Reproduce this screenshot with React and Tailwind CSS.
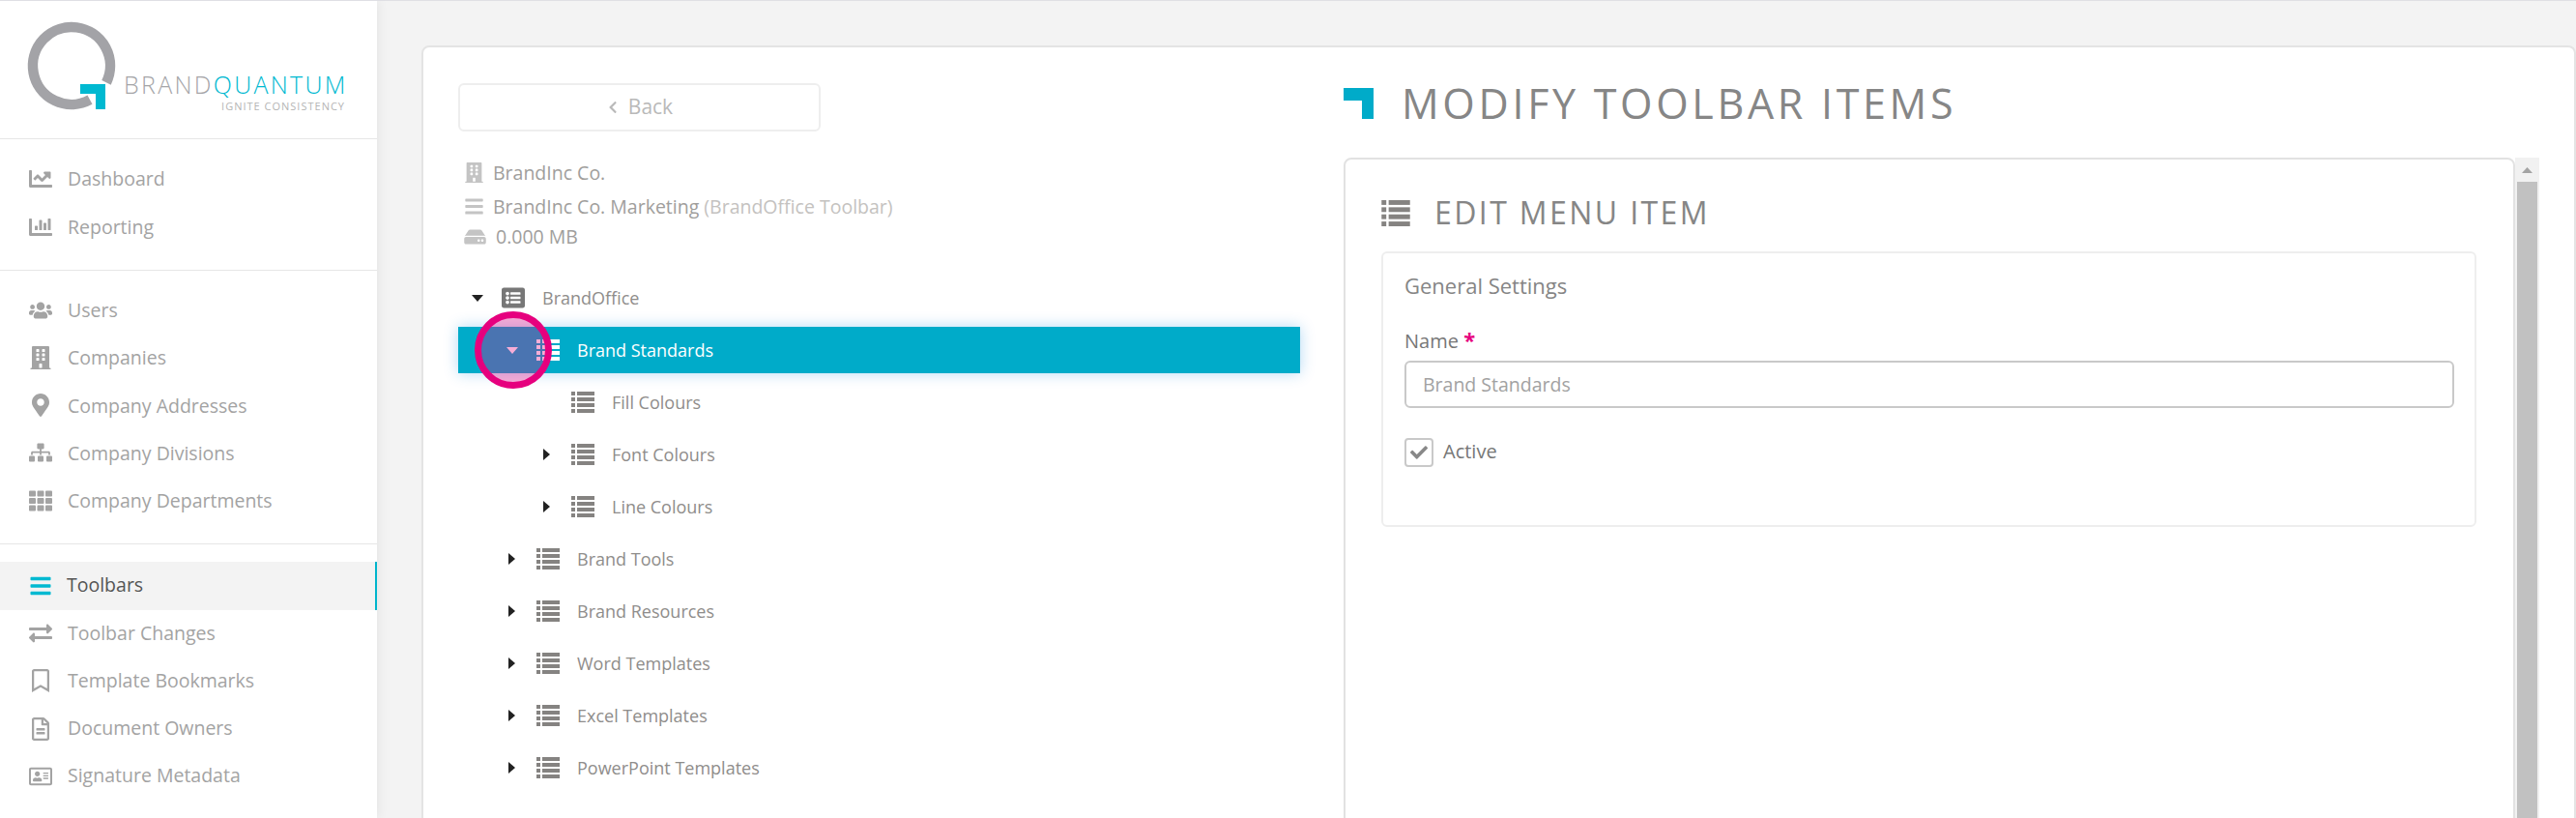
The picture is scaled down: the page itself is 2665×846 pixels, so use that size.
import React from 'react';
import {
  FaChartLine, FaChartBar, FaUsers, FaBuilding, FaMapMarkerAlt, FaSitemap, FaTh, FaBars,
  FaExchangeAlt, FaRegBookmark, FaRegFileAlt, FaRegAddressCard, FaHdd, FaChevronLeft, FaCheck, FaListAlt,
} from 'react-icons/fa';

const font = { fontFamily: '"Open Sans", sans-serif' };

const ListIcon = ({ className = '' }) => (
  <svg viewBox="0 0 24 22" className={className} fill="currentColor">
    <rect x="0" y="0" width="4" height="4" />
    <rect x="6" y="0" width="18" height="4" />
    <rect x="0" y="6" width="4" height="4" />
    <rect x="6" y="6" width="18" height="4" />
    <rect x="0" y="12" width="4" height="4" />
    <rect x="6" y="12" width="18" height="4" />
    <rect x="0" y="18" width="4" height="4" />
    <rect x="6" y="18" width="18" height="4" />
  </svg>
);

const Caret = ({ down, className = '' }) =>
  down ? (
    <svg viewBox="0 0 12 7" className={`w-3 h-[7px] ${className}`} fill="currentColor"><polygon points="0,0 12,0 6,7" /></svg>
  ) : (
    <svg viewBox="0 0 7 12" className={`w-[7px] h-3 -ml-[2px] ${className}`} fill="currentColor"><polygon points="0,0 7,6 0,12" /></svg>
  );

const sections = [
  { cls: 'pt-4 pb-[19px]', rowH: 'h-[50px]', items: [
    { label: 'Dashboard', Icon: FaChartLine },
    { label: 'Reporting', Icon: FaChartBar },
  ] },
  { cls: 'pt-4 pb-5', rowH: 'h-[49.25px]', items: [
    { label: 'Users', Icon: FaUsers },
    { label: 'Companies', Icon: FaBuilding },
    { label: 'Company Addresses', Icon: FaMapMarkerAlt },
    { label: 'Company Divisions', Icon: FaSitemap },
    { label: 'Company Departments', Icon: FaTh },
  ] },
  { cls: 'pt-[18px]', rowH: 'h-[49.25px]', labelCls: 'pb-[2px]', items: [
    { label: 'Toolbars', Icon: FaBars, active: true },
    { label: 'Toolbar Changes', Icon: FaExchangeAlt },
    { label: 'Template Bookmarks', Icon: FaRegBookmark },
    { label: 'Document Owners', Icon: FaRegFileAlt },
    { label: 'Signature Metadata', Icon: FaRegAddressCard },
  ] },
];

function Logo() {
  return (
    <div className="relative h-[143px] border-b border-[#e6e6e6]">
      <svg viewBox="0 0 130 130" className="absolute left-0 top-0 w-[130px] h-[130px]" fill="none">
        <path d="M 93 102.2 A 40 40 0 1 1 110 84.4" stroke="#a3a3a7" strokeWidth="10.5" />
        <polygon points="83,86 109,86 109,112 99,112 99,96 83,96" fill="#00b9d1" />
      </svg>
      <div className="absolute left-[128px] top-[68px] text-[25px] leading-[36px] font-light tracking-[2.3px] whitespace-nowrap text-[#a5a5a8]">
        BRAND<span className="text-[#00b9d1]">QUANTUM</span>
      </div>
      <div className="absolute right-[33px] top-[101px] text-[11px] leading-4 tracking-[1px] whitespace-nowrap text-[#b5b5b5]">
        IGNITE CONSISTENCY
      </div>
    </div>
  );
}

function Sidebar() {
  return (
    <aside className="w-[390px] shrink-0 bg-white shadow-[2px_0_10px_rgba(0,0,0,0.06)]">
      <Logo />
      {sections.map((s, i) => (
        <div key={i} className={`${s.cls} ${i < sections.length - 1 ? 'border-b border-[#e6e6e6]' : ''}`}>
          {s.items.map(({ label, Icon, active }) => (
            <div
              key={label}
              className={`${s.rowH} flex items-center ${active ? 'bg-[#f3f3f3] border-r-2 border-[#00b5cc] text-[#555]' : 'text-[#a3a3a3]'}`}
            >
              <span className="w-[70px] pl-4 pr-[2px] flex justify-center shrink-0">
                <Icon className={`text-[24px] ${active ? 'text-[#00b9d1]' : ''}`} />
              </span>
              <span className={`text-[19.5px] ${active ? '-ml-px' : ''} ${s.labelCls || ''}`}>{label}</span>
            </div>
          ))}
        </div>
      ))}
    </aside>
  );
}

const tree = [
  { label: 'BrandOffice', level: 0, caret: 'down', root: true },
  { label: 'Brand Standards', level: 1, caret: 'down', selected: true },
  { label: 'Fill Colours', level: 2 },
  { label: 'Font Colours', level: 2, caret: 'right' },
  { label: 'Line Colours', level: 2, caret: 'right' },
  { label: 'Brand Tools', level: 1, caret: 'right' },
  { label: 'Brand Resources', level: 1, caret: 'right' },
  { label: 'Word Templates', level: 1, caret: 'right' },
  { label: 'Excel Templates', level: 1, caret: 'right' },
  { label: 'PowerPoint Templates', level: 1, caret: 'right' },
];

const indent = ['pl-2', 'pl-[44px]', 'pl-[80px]'];

function TreeRow({ item }) {
  const { label, level, caret, root, selected } = item;
  return (
    <div className="h-[54px] py-[3px]">
      <div className={`relative h-12 flex items-center ${indent[level]} ${selected ? 'bg-[#00abc9] text-white shadow-[0_0_14px_rgba(0,130,220,0.3)]' : 'text-[#8f8d8b]'}`}>
        <span className="w-6 flex justify-center shrink-0 mr-[13px]">
          {caret && <Caret down={caret === 'down'} className={selected ? 'text-white' : 'text-[#222]'} />}
        </span>
        {root ? (
          <FaListAlt className="text-[#777] w-6 h-6 mr-[18px] shrink-0" />
        ) : (
          <ListIcon className={`w-6 h-[22px] mr-[18px] shrink-0 ${selected ? 'text-white' : 'text-[#858381]'}`} />
        )}
        <span className="text-[18px]">{label}</span>
        {selected && (
          <span className="absolute left-[17px] top-[-16px] w-20 h-20 rounded-full border-[7px] border-[#e6007e] bg-[rgba(230,0,126,0.32)]" />
        )}
      </div>
    </div>
  );
}

function LeftColumn() {
  return (
    <div className="w-[871px] shrink-0">
      <button className="w-[375px] h-[50px] border-2 border-[#eeeeee] rounded-md flex items-center justify-center gap-[9px] text-[#b9b9b9] text-[21px]">
        <FaChevronLeft className="text-[14px]" /> Back
      </button>
      <div className="mt-[25px] pl-[6px] text-[19.5px] text-[#a09e9c]">
        <div className="h-[35px] flex items-center">
          <FaBuilding className="w-[19px] h-[21px] ml-px mr-[10px] text-[#c4c4c4]" />BrandInc Co.
        </div>
        <div className="h-[35px] flex items-center">
          <FaBars className="w-[19px] h-[21px] ml-px mr-[10px] text-[#c4c4c4]" />
          <span>BrandInc Co. Marketing <span className="text-[#c4c2c0]">(BrandOffice Toolbar)</span></span>
        </div>
        <div className="h-[28px] flex items-center">
          <FaHdd className="w-[23px] h-5 mr-[10px] text-[#c4c4c4]" />0.000 MB
        </div>
      </div>
      <div className="mt-[22px]">
        {tree.map((t) => <TreeRow key={t.label} item={t} />)}
      </div>
    </div>
  );
}

function RightColumn() {
  return (
    <div className="ml-[45px] w-[1237px] shrink-0 pt-[5px]">
      <div className="h-[32px] flex items-center">
        <svg viewBox="0 0 31 32" className="w-[31px] h-8 shrink-0" fill="#00abc9"><polygon points="0,0 31,0 31,32 19,32 19,13 0,13" /></svg>
        <h1 className="ml-[29px] pb-[2px] text-[43px] leading-none tracking-[3.7px] text-[#868686] whitespace-nowrap">MODIFY TOOLBAR ITEMS</h1>
      </div>
      <div className="mt-[40px] flex">
        <div className="w-[1213px] h-[800px] border-2 border-[#e2e2e2] rounded-lg px-[37px] pt-10">
          <div className="h-[30px] flex items-center">
            <ListIcon className="w-[30px] h-[27px] text-[#858381]" />
            <h2 className="ml-[25px] text-[32px] leading-none tracking-[2.4px] text-[#868686] whitespace-nowrap">EDIT MENU ITEM</h2>
          </div>
          <div className="mt-[25px] w-[1133px] h-[285px] border-2 border-[#eeeeee] rounded-md px-[22px] pt-[18px]">
            <div className="text-[22px] font-medium leading-[30px] text-[#858585]">General Settings</div>
            <div className="mt-[28px] h-[30px] text-[20px] leading-[30px] text-[#777]">Name <span className="text-[#e6007e] font-bold text-[22px] leading-none">*</span></div>
            <div className="mt-[5px] h-[49px] w-[1086px] border-2 border-[#c9c9c9] rounded-md flex items-center px-[17px] text-[19.5px] text-[#a2a2a2]">Brand Standards</div>
            <div className="mt-[30px] flex items-center">
              <span className="w-[30px] h-[30px] border-2 border-[#c9c9c9] rounded-[4px] flex items-center justify-center">
                <FaCheck className="text-[#888] text-[18px]" />
              </span>
              <span className="ml-[10px] pb-px text-[20px] text-[#777]">Active</span>
            </div>
          </div>
        </div>
        <div className="w-[25px] bg-[#f1f1f1] flex flex-col items-center shrink-0">
          <div className="h-[25px] flex items-center justify-center">
            <svg viewBox="0 0 11 6" className="w-[11px] h-[6px]" fill="#a3a3a3"><polygon points="5.5,0 11,6 0,6" /></svg>
          </div>
          <div className="w-[21px] flex-1 bg-[#c1c1c1]" />
        </div>
      </div>
    </div>
  );
}

export default function App() {
  return (
    <div className="h-[846px] overflow-hidden bg-[#f3f3f3] border-t border-[#dfdfe4] flex" style={font}>
      <Sidebar />
      <main className="flex-1 pl-[46px] pt-[46px] min-w-0">
        <div className="h-[850px] bg-white border-2 border-[#e4e4e4] rounded-lg pl-[36px] pt-[37px] flex overflow-hidden">
          <LeftColumn />
          <RightColumn />
        </div>
      </main>
    </div>
  );
}
